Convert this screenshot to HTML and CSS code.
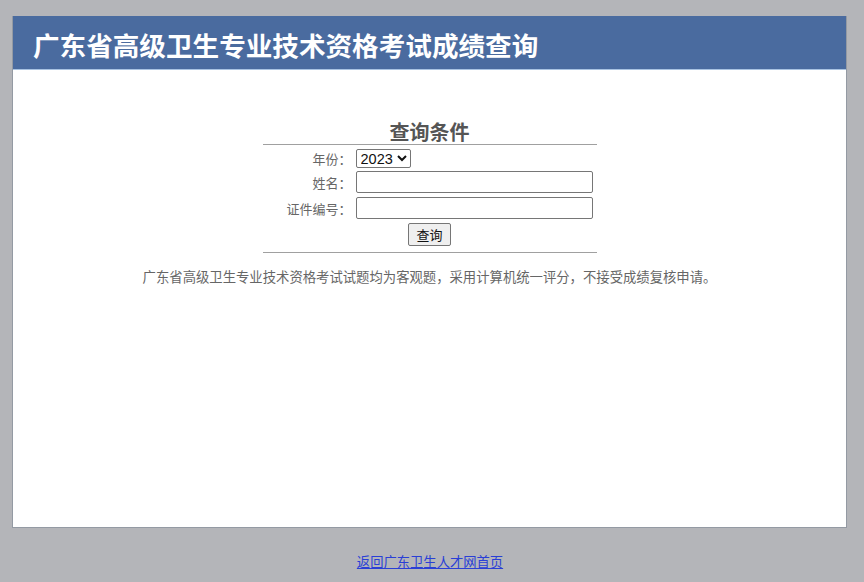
FILE: index.html
```html
<!DOCTYPE html>
<html lang="zh-CN">
<head>
<meta charset="utf-8">
<title>广东省高级卫生专业技术资格考试成绩查询</title>
<link rel="stylesheet" href="styles.css">
</head>
<body>
<div class="page">
  <div class="header">广东省高级卫生专业技术资格考试成绩查询</div>
  <div class="content">
    <div class="query">
      <div class="query-title">查询条件</div>
      <div class="query-rows">
        <div class="row">
          <label class="lbl">年份：</label>
          <div class="field"><select class="sel"><option>2023</option></select></div>
        </div>
        <div class="row">
          <label class="lbl">姓名：</label>
          <div class="field"><input class="txt" type="text"></div>
        </div>
        <div class="row">
          <label class="lbl">证件编号：</label>
          <div class="field"><input class="txt" type="text"></div>
        </div>
        <div class="row row-btn">
          <button class="btn">查询</button>
        </div>
      </div>
    </div>
    <p class="note">广东省高级卫生专业技术资格考试试题均为客观题，采用计算机统一评分，不接受成绩复核申请。</p>
  </div>
</div>
<div class="footer"><a href="#" class="home">返回广东卫生人才网首页</a></div>
</body>
</html>
```
FILE: styles.css
```css
html, body {
  margin: 0;
  padding: 0;
}
body {
  background: #b4b5b9;
  font-family: "Liberation Sans", Arial, "Noto Sans CJK SC", sans-serif;
  font-size: 13px;
  color: #555;
}
.page {
  margin: 16px 0 0 12px;
  width: 835px;
  box-sizing: border-box;
  background: #fff;
  border: 1px solid #949aa3;
  border-top: none;
  height: 512px;
}
.header {
  background: #4a6b9f;
  color: #fff;
  height: 54px;
  line-height: 57px;
  font-size: 26.6px;
  font-weight: bold;
  padding-left: 20px;
  border-bottom: 1px solid #a9c3e2;
  box-sizing: border-box;
  font-family: "Noto Sans CJK SC", sans-serif;
}
.content {
  padding-top: 50px;
}
.query {
  width: 334px;
  margin: 0 auto;
}
.query-title {
  text-align: center;
  font-size: 20px;
  font-weight: bold;
  color: #555;
  line-height: 24px;
  border-bottom: 1px solid #a0a0a0;
  font-family: "Noto Sans CJK SC", sans-serif;
}
.query-rows {
  border-bottom: 1px solid #a0a0a0;
  padding: 2px 0 5px;
}
.row {
  display: flex;
  align-items: center;
  height: 26px;
}
.row:first-child {
  height: 22px;
}
.lbl {
  width: 93px;
  text-align: right;
  padding-right: 4px;
  box-sizing: border-box;
  color: #666;
  font-size: 13px;
}
.field {
  display: flex;
  align-items: center;
}
.sel {
  font-family: "Liberation Sans", Arial, sans-serif;
  font-size: 14.5px;
  color: #111;
  height: 19px;
  padding: 0;
  border: 1px solid #767676;
  border-radius: 2px;
  background: #fff;
}
.txt {
  width: 237px;
  height: 22px;
  box-sizing: border-box;
  border: 1px solid #767676;
  border-radius: 2px;
  padding: 1px 2px;
}
.row-btn {
  justify-content: center;
}
.btn {
  font-family: "Noto Sans CJK SC", sans-serif;
  font-size: 13px;
  color: #111;
  height: 23px;
  padding: 0 7px;
  background: #efefef;
  border: 1px solid #767676;
  border-radius: 2px;
}
.note {
  text-align: center;
  margin: 14px 0 0;
  font-size: 13.35px;
  color: #666;
  font-family: "Noto Sans CJK SC", sans-serif;
}
.footer {
  text-align: center;
  padding-top: 24px;
  padding-right: 4px;
}
.home {
  color: #2a3fd6;
  font-size: 13.3px;
  font-family: "Noto Sans CJK SC", sans-serif;
}
```
